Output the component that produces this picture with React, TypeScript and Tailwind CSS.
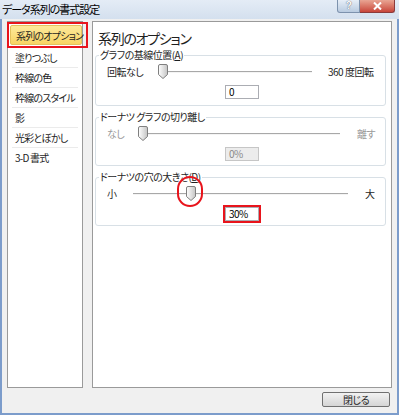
import React, { FC } from "react";

const Thumb: FC<{ id: string }> = ({ id }) => (
  <svg width="10" height="15" viewBox="0 0 10 15">
    <defs>
      <linearGradient id={id} x1="0" x2="1" y1="0" y2="0">
        <stop offset="0" stopColor="#ffffff" />
        <stop offset="1" stopColor="#c4c4c4" />
      </linearGradient>
    </defs>
    <path
      d="M2 0.5 H8 Q9.5 0.5 9.5 2 V10.5 L5 14.5 L0.5 10.5 V2 Q0.5 0.5 2 0.5 Z"
      fill={`url(#${id})`}
      stroke="#7f7f7f"
    />
  </svg>
);

type SliderProps = {
  id: string;
  left: string;
  right: string;
  labelW: string;
  trackW: string;
  gapR: string;
  thumbLeft: string;
  disabled?: boolean;
  circled?: boolean;
};

const SliderRow: FC<SliderProps> = ({ id, left, right, labelW, trackW, gapR, thumbLeft, disabled, circled }) => (
  <div className={`flex items-center h-[15px] pl-[11px] ${disabled ? "text-[#9a9a9a]" : "text-[#1e1e1e]"}`}>
    <span className={`${labelW} shrink-0`}>{left}</span>
    <div className={`relative ${trackW} h-[15px] shrink-0`}>
      <div className="absolute left-0 right-0 top-[7px] h-px bg-[#a8a8a8]" />
      <div className="absolute left-0 right-0 top-[8px] h-px bg-[#f4f4f4]" />
      <div className={`absolute top-0 ${thumbLeft}`}>
        <Thumb id={id} />
        {circled && (
          <div className="absolute -left-[9px] -top-[10px] w-[26px] h-[31px] rounded-full border-2 border-[#e8141c]" />
        )}
      </div>
    </div>
    <span className={`${gapR} shrink-0 whitespace-nowrap`}>{right}</span>
  </div>
);

const Group: FC<{ legend: React.ReactNode; h: string; children: React.ReactNode }> = ({ legend, h, children }) => (
  <div className={`relative ${h} rounded-[3px] border border-[#d8e0e6]`}>
    <div className="absolute -top-[8px] left-[3px] bg-white px-px leading-[14px] text-[#1e1e1e] whitespace-nowrap">{legend}</div>
    <div className="pt-[8px]">{children}</div>
  </div>
);

const listItems = ["塗りつぶし", "枠線の色", "枠線のスタイル", "影", "光彩とぼかし", "3-D 書式"];

export default function App() {
  return (
    <div className="w-[399px] h-[415px] flex flex-col bg-[#f0f0f0] font-['Noto_Sans_CJK_JP','Noto_Sans',sans-serif] text-[10px] tracking-[-0.5px] [font-feature-settings:'palt'] overflow-hidden">
      {/* title bar */}
      <div className="h-[19px] shrink-0 flex items-start bg-gradient-to-b from-[#e4ecf6] to-[#d4e0ee]">
        <span className="pl-[2px] pt-[2px] text-[11px] leading-[15px] tracking-[-1px] text-black">データ系列の書式設定</span>
        <div className="ml-auto mr-[4px] flex">
          <div className="w-[23px] h-[13px] flex items-center justify-center rounded-bl-[3px] border border-t-0 border-[#7d92ad] bg-gradient-to-b from-[#e7eef7] to-[#b9cbe0]">
            <span className="font-['Liberation_Sans',sans-serif] text-[10px] leading-[10px] font-bold text-white [text-shadow:0_0_1px_#223]">?</span>
          </div>
          <div className="w-[35px] h-[13px] flex items-center justify-center rounded-br-[3px] border border-t-0 border-l-0 border-[#8b3b3b] bg-gradient-to-b from-[#e8a493] to-[#c7443a]">
            <svg width="9" height="8" viewBox="0 0 9 8">
              <path d="M1 0.5 L8 7.5 M8 0.5 L1 7.5" stroke="#ffffff" strokeWidth="2" />
            </svg>
          </div>
        </div>
      </div>

      {/* body */}
      <div className="flex-1 flex flex-col border-x-2 border-b-2 border-[#7c9ccb] pl-[5px] pr-[5px] pt-[2px]">
        <div className="flex h-[367px] gap-[9px]">
          {/* left list */}
          <div className="relative w-[76px] shrink-0 border border-[#9a9a9a] bg-white pt-[3px] tracking-[-0.8px]">
            <div className="h-[22px]">
              <div className="ml-[2px] h-[20px] pl-[5px] flex items-center rounded-[2px] border border-[#e3c15e] bg-gradient-to-b from-[#fde99a] to-[#f8d462] text-[#1e1e1e] whitespace-nowrap">
                系列のオプション
              </div>
            </div>
            {listItems.map((it) => (
              <div key={it} className="mx-[4px] h-[20px] flex items-center pl-[3px] border-t border-[#ebebeb] text-[#1e1e1e] whitespace-nowrap">
                {it}
              </div>
            ))}
            <div className="absolute -left-px top-[0px] w-[81px] h-[26px] border-2 border-[#e8141c]" />
          </div>

          {/* right panel */}
          <div className="flex-1 border border-[#9a9a9a] bg-white pt-[6px] pl-[2px] pr-[5px]">
            <div className="ml-[3px] h-[20px] text-[14px] leading-[20px] tracking-[-1.3px] text-[#1e1e1e]">系列のオプション</div>
            <div className="mt-[7px] flex flex-col gap-[11px]">
              <Group
                h="h-[51px]"
                legend={
                  <>
                    グラフの基線位置(<span className="underline">A</span>)
                  </>
                }
              >
                <SliderRow
                  id="t1"
                  left="回転なし"
                  right="360 度回転"
                  labelW="w-[51px]"
                  trackW="w-[154px]"
                  gapR="ml-[16px]"
                  thumbLeft="left-0"
                />
                <div className="ml-[129px] mt-[6px] w-[34px] h-[14px] border border-[#abadb3] pl-[3px] text-[10px] leading-[12px] text-black">
                  0
                </div>
              </Group>

              <Group h="h-[49px]" legend="ドーナツ グラフの切り離し">
                <SliderRow
                  id="t2"
                  left="なし"
                  right="離す"
                  labelW="w-[31px]"
                  trackW="w-[202px]"
                  gapR="ml-[17px]"
                  thumbLeft="left-0"
                  disabled
                />
                <div className="ml-[129px] mt-[6px] w-[34px] h-[14px] border border-[#c6c6c6] bg-[#ececec] pl-[3px] text-[10px] leading-[12px] text-[#8a8a8a]">
                  0%
                </div>
              </Group>

              <Group
                h="h-[49px]"
                legend={
                  <>
                    ドーナツの穴の大きさ(<span className="underline">D</span>)
                  </>
                }
              >
                <SliderRow
                  id="t3"
                  left="小"
                  right="大"
                  labelW="w-[26px]"
                  trackW="w-[215px]"
                  gapR="ml-[17px]"
                  thumbLeft="left-[53px]"
                  circled
                />
                <div className="ml-[127px] mt-[4px] w-[38px] h-[18px] border-2 border-[#e8141c]">
                  <div className="w-[34px] h-[14px] border border-[#abadb3] pl-[3px] text-[10px] leading-[12px] text-black">
                    30%
                  </div>
                </div>
              </Group>
            </div>
          </div>
        </div>

        <div className="mt-[4px] flex justify-end pr-[2px]">
          <button className="w-[68px] h-[15px] rounded-[2px] border border-[#707070] bg-gradient-to-b from-[#f2f2f2] to-[#d5d5d5] text-[10px] leading-[13px] text-[#1e1e1e]">
            閉じる
          </button>
        </div>
      </div>
    </div>
  );
}
